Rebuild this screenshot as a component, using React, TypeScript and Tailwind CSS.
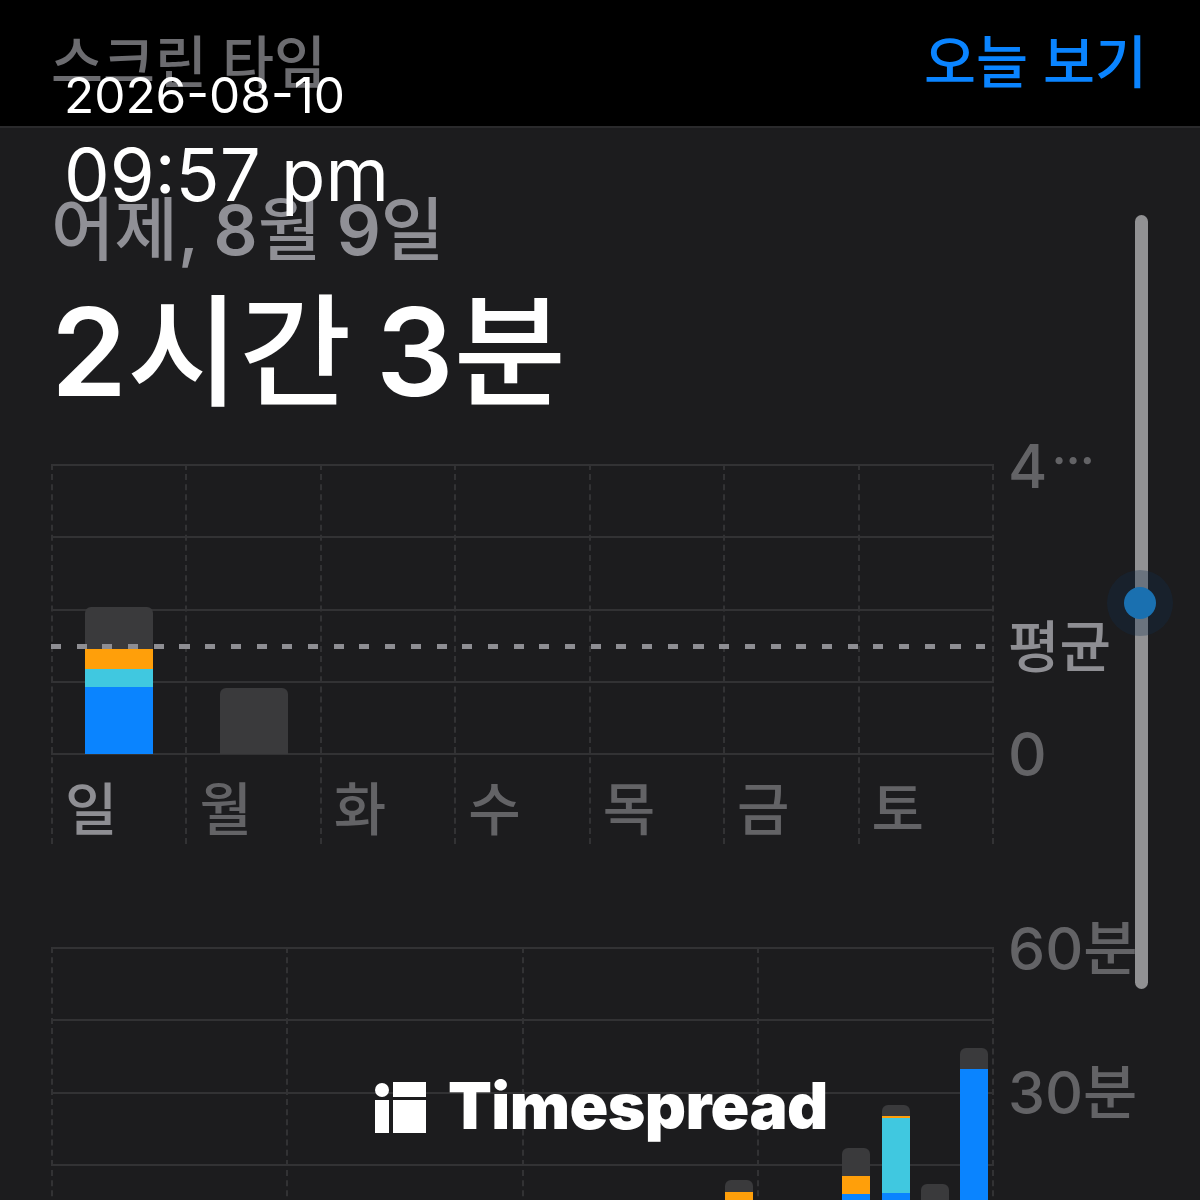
const FONT = "font-['Inter','Noto_Sans_CJK_KR',sans-serif]";

const days = [
  { label: "일", tone: "text-[#8e8e93]", segs: [["bg-[#3a3a3c] rounded-t-[6px]", 42], ["bg-[#ff9f0a]", 20], ["bg-[#40c8e0]", 18], ["bg-[#0a84ff]", 67]] },
  { label: "월", tone: "text-[#636366]", segs: [["bg-[#3a3a3c] rounded-t-[6px]", 66]] },
  { label: "화", tone: "text-[#636366]", segs: [] },
  { label: "수", tone: "text-[#636366]", segs: [] },
  { label: "목", tone: "text-[#636366]", segs: [] },
  { label: "금", tone: "text-[#636366]", segs: [] },
  { label: "토", tone: "text-[#636366]", segs: [] },
] as { label: string; tone: string; segs: [string, number][] }[];

const hours: Record<number, [string, number][]> = {
  17: [["bg-[#3a3a3c] rounded-t-[6px]", 12], ["bg-[#ff9f0a]", 30]],
  20: [["bg-[#3a3a3c] rounded-t-[6px]", 28], ["bg-[#ff9f0a]", 18], ["bg-[#0a84ff]", 10]],
  21: [["bg-[#3a3a3c] rounded-t-[6px]", 11], ["bg-[#ff9f0a]", 2], ["bg-[#40c8e0]", 75], ["bg-[#0a84ff]", 10]],
  22: [["bg-[#3a3a3c] rounded-t-[6px]", 20]],
  23: [["bg-[#3a3a3c] rounded-t-[6px]", 21], ["bg-[#0a84ff]", 135]],
};

function Bar({ segs, className }: { segs: [string, number][]; className: string }) {
  return (
    <div className={`flex flex-col ${className}`}>
      {segs.map(([c, h], i) => (
        <div key={i} className={c} style={{ height: h }} />
      ))}
    </div>
  );
}

function HLines({ rows }: { rows: number }) {
  return (
    <div className="absolute left-0 right-0 top-0 flex flex-col">
      {Array.from({ length: rows }).map((_, i) => (
        <div key={i} className="h-[72.25px] border-t-2 border-[#323234]" />
      ))}
    </div>
  );
}

export default function App() {
  return (
    <div className={`relative h-[1200px] w-[1200px] overflow-hidden bg-[#1c1c1e] ${FONT}`}>
      <header className="flex h-[128px] items-start justify-between border-b-2 border-[#2a2a2c] bg-black pl-[51px] pr-[53px] pt-[27px]">
        <span className="text-[56.5px] leading-[72px] font-medium text-[#6c6c70]">스크린 타임</span>
        <span className="text-[56.5px] leading-[72px] font-medium text-[#0a84ff]">오늘 보기</span>
      </header>

      <div className="pl-[51px] pt-[62px]">
        <div className="text-[69px] leading-[80px] font-medium text-[#909096] [word-spacing:-3px]">
          어제, <span className="font-semibold">8</span>월 <span className="font-semibold">9</span>일
        </div>
        <div className="mt-[17px] text-[122px] leading-[130px] font-medium text-white [word-spacing:-8px]">
          <span className="font-semibold">2</span>시간 <span className="font-semibold">3</span>분
        </div>

        <div className="relative mt-[47px] flex h-[380px]">
          <div className="relative h-[380px] w-[943px]">
            <HLines rows={4} />
            <div className="absolute left-0 right-0 top-[289px] border-t-2 border-[#323234]" />
            <div className="relative flex h-full border-r-2 border-dashed border-[#323234]">
              {days.map((d) => (
                <div key={d.label} className="flex h-full flex-1 flex-col border-l-2 border-dashed border-[#323234]">
                  <div className="flex h-[290px] shrink-0 items-end justify-center">
                    <Bar segs={d.segs} className="w-[68px]" />
                  </div>
                  <div className={`pl-[12px] pt-[21px] text-[57px] leading-[69px] font-medium ${d.tone}`}>{d.label}</div>
                </div>
              ))}
            </div>
            <div className="absolute left-0 top-[180px] h-[5px] w-[934px] bg-[repeating-linear-gradient(90deg,#8e8e93_0_10px,transparent_10px_25.7px)]" />
          </div>
          <div className="relative ml-[14px] flex h-[320px] w-[120px] flex-col text-[#636366]">
            <div className="-mt-[26px] flex h-[56px] items-start text-[60px] leading-[56px] font-medium">
              4<span className="ml-[4px] text-[50px] leading-[44px] tracking-[-1px]">···</span>
            </div>
            <div className="mt-[118px] text-[56px] leading-[70px] font-medium text-[#8e8e93]">평균</div>
            <div className="mt-[37px] text-[60px] leading-[70px] font-medium">0</div>
          </div>
        </div>

        <div className="relative mt-[103px] flex">
          <div className="relative h-[300px] w-[943px]">
            <HLines rows={4} />
            <div className="relative flex h-full border-r-2 border-dashed border-[#323234]">
              {[0, 1, 2, 3].map((c) => (
                <div key={c} className="h-full flex-1 border-l-2 border-dashed border-[#323234]" />
              ))}
            </div>
            <div className="absolute left-0 right-0 top-0 grid h-[300px] grid-cols-[repeat(24,1fr)]">
              {Array.from({ length: 24 }).map((_, i) => (
                <div key={i} className="flex justify-center">
                  {hours[i] && (
                    <Bar
                      segs={hours[i]}
                      className={`w-[28px] ${
                        i === 17 ? "mt-[233px]" : i === 20 ? "mt-[201px]" : i === 21 ? "mt-[158px]" : i === 22 ? "mt-[237px]" : "mt-[101px]"
                      }`}
                    />
                  )}
                </div>
              ))}
            </div>
          </div>
          <div className="ml-[14px] flex flex-col text-[#636366]">
            <div className="-mt-[33px] text-[59px] leading-[70px] font-medium">60분</div>
            <div className="mt-[74px] text-[59px] leading-[70px] font-medium">30분</div>
          </div>
        </div>
      </div>

      {/* Overlay: timestamp */}
      <div className="absolute left-[64px] top-[68px] text-white">
        <div className="text-[49.5px] leading-[54px]">2026-08-10</div>
        <div className="mt-[17px] text-[72.5px] leading-[72px]">09:57 pm</div>
      </div>

      {/* Overlay: scroll indicator */}
      <div className="absolute left-[1135px] top-[215px] h-[774px] w-[13px] rounded-full bg-[#919193]" />
      <div className="absolute left-[1107px] top-[570px] flex h-[66px] w-[66px] items-center justify-center rounded-full bg-[#10304f]/30">
        <div className="h-[32px] w-[32px] rounded-full bg-[#1a70b0]" />
      </div>

      {/* Overlay: watermark */}
      <div className="absolute left-[375px] top-[1074px] flex items-center gap-[22px]">
        <svg width="51" height="53" viewBox="0 0 51 53" fill="white" aria-hidden="true" className="mt-[3px]">
          <circle cx="7" cy="9" r="7" />
          <rect x="0" y="19" width="14" height="33" />
          <rect x="18" y="1" width="33" height="15" />
          <rect x="18" y="19" width="33" height="33" />
        </svg>
        <span className="text-[64px] leading-[64px] font-black tracking-[-0.6px] text-white">Timespread</span>
      </div>
    </div>
  );
}
